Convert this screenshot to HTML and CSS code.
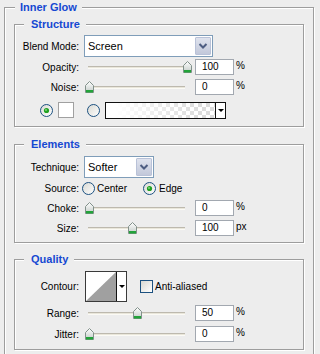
FILE: index.html
```html
<!DOCTYPE html>
<html lang="en">
<head>
    <meta charset="UTF-8">
    <title>Inner Glow</title>
    <link rel="stylesheet" href="styles.css">
</head>
<body>

    <!-- shared shapes -->
    <svg class="defs" width="0" height="0">
        <defs>
            <linearGradient id="thumbFill" x1="0" y1="0" x2="0" y2="1">
                <stop offset="0" stop-color="#ffffff"/>
                <stop offset="1" stop-color="#c3cbc7"/>
            </linearGradient>
            <linearGradient id="radioFill" x1="0" y1="0" x2="1" y2="1">
                <stop offset="0" stop-color="#d8d8d2"/>
                <stop offset="1" stop-color="#ffffff"/>
            </linearGradient>
            <symbol id="thumb" viewBox="0 0 9 12">
                <polygon points="0.5,4.5 4.5,0.5 8.5,4.5 8.5,11.5 0.5,11.5" fill="url(#thumbFill)" stroke="#82918b"/>
                <rect x="1" y="9" width="7" height="2.5" fill="#22a33a"/>
            </symbol>
            <symbol id="radio" viewBox="0 0 13 13">
                <circle cx="6.5" cy="6.5" r="6" fill="url(#radioFill)" stroke="#1c5180"/>
            </symbol>
            <symbol id="radio-on" viewBox="0 0 13 13">
                <circle cx="6.5" cy="6.5" r="6" fill="url(#radioFill)" stroke="#1c5180"/>
                <circle cx="6.5" cy="6.5" r="2.6" fill="#21a121"/>
                <circle cx="6" cy="6" r="1" fill="#7ad87a"/>
            </symbol>
            <symbol id="chevron" viewBox="0 0 16 18">
                <path d="M4.5 7 L8 10.5 L11.5 7" fill="none" stroke="#4d5d82" stroke-width="2"/>
            </symbol>
        </defs>
    </svg>

    <fieldset class="group">
        <legend>Inner Glow</legend>

        <!-- Structure -->
        <fieldset class="panel panel-structure">
            <legend>Structure</legend>
            <div class="row row-select">
                <span class="lbl">Blend Mode:</span>
                <div class="select select-blend">
                    <span class="select-text">Screen</span>
                    <span class="select-btn"><svg width="16" height="18"><use href="#chevron"/></svg></span>
                </div>
            </div>
            <div class="row">
                <span class="lbl">Opacity:</span>
                <div class="slider"><div class="track"></div><svg class="thumb" style="left:99px"><use href="#thumb"/></svg></div>
                <div class="num">100</div><span class="unit">%</span>
            </div>
            <div class="row">
                <span class="lbl">Noise:</span>
                <div class="slider"><div class="track"></div><svg class="thumb" style="left:1px"><use href="#thumb"/></svg></div>
                <div class="num">0</div><span class="unit">%</span>
            </div>
            <div class="row row-color">
                <svg class="radio"><use href="#radio-on"/></svg>
                <div class="swatch"></div>
                <svg class="radio radio-grad"><use href="#radio"/></svg>
                <div class="gradient">
                    <div class="gradient-fill"></div>
                    <div class="gradient-arrow"><span class="tri"></span></div>
                </div>
            </div>
        </fieldset>

        <!-- Elements -->
        <fieldset class="panel panel-elements">
            <legend>Elements</legend>
            <div class="row row-select">
                <span class="lbl">Technique:</span>
                <div class="select select-tech">
                    <span class="select-text">Softer</span>
                    <span class="select-btn"><svg width="16" height="18"><use href="#chevron"/></svg></span>
                </div>
            </div>
            <div class="row">
                <span class="lbl lbl-tight">Source:</span>
                <span class="opt opt-center"><svg class="radio"><use href="#radio"/></svg>Center</span>
                <span class="opt"><svg class="radio"><use href="#radio-on"/></svg>Edge</span>
            </div>
            <div class="row">
                <span class="lbl">Choke:</span>
                <div class="slider"><div class="track"></div><svg class="thumb" style="left:1px"><use href="#thumb"/></svg></div>
                <div class="num">0</div><span class="unit">%</span>
            </div>
            <div class="row">
                <span class="lbl">Size:</span>
                <div class="slider"><div class="track"></div><svg class="thumb" style="left:44px"><use href="#thumb"/></svg></div>
                <div class="num">100</div><span class="unit">px</span>
            </div>
        </fieldset>

        <!-- Quality -->
        <fieldset class="panel panel-quality">
            <legend>Quality</legend>
            <div class="row row-contour">
                <span class="lbl">Contour:</span>
                <div class="contour">
                    <svg class="contour-preview" width="30" height="29" viewBox="0 0 30 29">
                        <polygon points="0,29 30,0 30,29" fill="#a0a0a0"/>
                    </svg>
                    <div class="contour-arrow"><span class="tri"></span></div>
                </div>
                <span class="checkbox"></span>
                <span class="check-text">Anti-aliased</span>
            </div>
            <div class="row row-range">
                <span class="lbl">Range:</span>
                <div class="slider"><div class="track"></div><svg class="thumb" style="left:49px"><use href="#thumb"/></svg></div>
                <div class="num">50</div><span class="unit">%</span>
            </div>
            <div class="row">
                <span class="lbl">Jitter:</span>
                <div class="slider"><div class="track"></div><svg class="thumb" style="left:1px"><use href="#thumb"/></svg></div>
                <div class="num">0</div><span class="unit">%</span>
            </div>
        </fieldset>
    </fieldset>

</body>
</html>
```

FILE: styles.css
```css
body {
    margin: 0;
    background-color: #ededed;
    font-family: "Liberation Sans", Arial, sans-serif;
    font-size: 10px;
    color: #000;
    overflow: hidden;
}

.defs {
    position: absolute;
}

fieldset {
    margin: 0;
    padding: 0;
    min-width: 0;
    border: 1px solid #9d9d9d;
    box-shadow: inset 1px 1px 0 #fff, 1px 1px 0 #fff;
}

legend {
    font-size: 11px;
    font-weight: bold;
    line-height: 14px;
    color: #1548d2;
    background-color: #ededed;
    padding: 0 5px;
}

.group {
    width: 310px;
    margin-left: 4px;
    padding: 3px 9px 12px;
    box-sizing: border-box;
}

.group > legend {
    margin-left: 1px;
}

.panel > legend {
    margin-left: 9px;
    padding: 0 6px 0 7px;
}

.panel-structure {
    padding: 4px 0 3px;
}

.panel-elements {
    margin-top: 10px;
    padding: 5px 0 4px;
}

.panel-quality {
    margin-top: 9px;
    padding: 5px 0 5px;
}

.row {
    display: flex;
    align-items: center;
    height: 20px;
}

.row-select {
    height: 22px;
}

.row-color {
    height: 26px;
    padding-left: 25px;
}

.row-contour {
    height: 31px;
}

.row-range {
    height: 22px;
}

.lbl {
    width: 64px;
    margin-right: 5px;
    text-align: right;
    white-space: nowrap;
}

.lbl-tight {
    margin-right: 3px;
}

/* dropdowns */
.select {
    display: flex;
    align-items: center;
    height: 22px;
    box-sizing: border-box;
    border: 1px solid #7f9db9;
    background-color: #fff;
}

.select-blend {
    width: 129px;
}

.select-tech {
    width: 70px;
}

.select-text {
    flex: 1;
    padding-left: 3px;
    font-size: 11px;
}

.select-btn {
    width: 16px;
    height: 18px;
    margin-right: 1px;
    box-sizing: border-box;
    border: 1px solid #b9c2d8;
    border-radius: 1px;
    background: linear-gradient(#dfe3ee, #c2c8da);
}

.select-btn svg {
    display: block;
    margin: -1px;
}

/* sliders */
.slider {
    position: relative;
    width: 108px;
    height: 12px;
}

.track {
    position: absolute;
    left: 4px;
    top: 5px;
    width: 97px;
    height: 1px;
    border-top: 1px solid #bdb9ae;
    border-bottom: 1px solid #fbfaf5;
    background-color: #e9e6da;
}

.thumb {
    position: absolute;
    top: 0;
    width: 9px;
    height: 12px;
}

.num {
    width: 39px;
    height: 16px;
    margin-left: 3px;
    box-sizing: border-box;
    border: 1px solid #a2a8b0;
    background-color: #fff;
    padding-left: 6px;
    line-height: 14px;
}

.unit {
    margin-left: 2px;
    margin-top: -3px;
}

/* radios, swatch, gradient */
.radio {
    width: 13px;
    height: 13px;
    flex: none;
}

.swatch {
    width: 16px;
    height: 16px;
    margin-left: 5px;
    box-sizing: border-box;
    border: 1px solid #a0a0a0;
    background-color: #fff;
}

.radio-grad {
    margin-left: 13px;
}

.gradient {
    display: flex;
    width: 121px;
    height: 17px;
    margin-left: 5px;
    box-sizing: border-box;
    border: 1px solid #111;
}

.gradient-fill {
    flex: 1;
    background:
        linear-gradient(to right, #fff 8%, rgba(255, 255, 255, 0) 85%),
        repeating-conic-gradient(#dcdcdc 0 25%, #fff 0 50%) 0 0 / 8px 8px;
}

.gradient-arrow,
.contour-arrow {
    display: flex;
    align-items: center;
    justify-content: center;
    width: 9px;
    border-left: 1px solid #111;
    background-color: #fff;
}

.tri {
    width: 0;
    height: 0;
    border-left: 3px solid transparent;
    border-right: 3px solid transparent;
    border-top: 3px solid #000;
}

.opt {
    display: flex;
    align-items: center;
    gap: 2px;
}

.opt-center {
    width: 61px;
}

.opt:last-child {
    gap: 3px;
}

/* contour */
.contour {
    display: flex;
    margin-left: 1px;
    height: 31px;
    box-sizing: border-box;
    border: 1px solid #3a3a3a;
    background-color: #fff;
}

.contour-preview {
    display: block;
}

.checkbox {
    width: 13px;
    height: 13px;
    margin-left: 13px;
    box-sizing: border-box;
    border: 1px solid #1c5180;
    background: linear-gradient(135deg, #d9d9d2, #fff);
}

.check-text {
    margin-left: 2px;
}
```
